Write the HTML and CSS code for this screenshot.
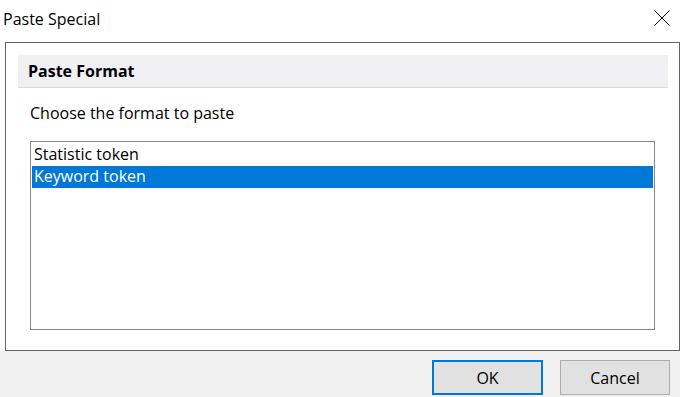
FILE: index.html
```html
<!DOCTYPE html>
<html lang="en">
<head>
    <meta charset="UTF-8">
    <title>Paste Special</title>
    <link rel="stylesheet" href="styles.css">
</head>
<body>
    <div class="titlebar">
        <span class="title">Paste Special</span>
        <svg class="close" width="16" height="16" viewBox="0 0 16 16">
            <path d="M0.5 0.5 L15.5 15.5 M15.5 0.5 L0.5 15.5" stroke="#000" stroke-width="1" fill="none"/>
        </svg>
    </div>

    <div class="panel">
        <div class="section-head">Paste Format</div>
        <div class="prompt">Choose the format to paste</div>
        <div class="listbox">
            <div class="item">Statistic token</div>
            <div class="item selected">Keyword token</div>
        </div>
    </div>

    <div class="footer">
        <button class="btn default">OK</button>
        <button class="btn">Cancel</button>
    </div>
</body>
</html>
```

FILE: styles.css
```css
* {
    box-sizing: border-box;
}

body {
    margin: 0;
    background: #fff;
    font-family: "Open Sans", "Noto Sans", sans-serif;
    font-size: 16px;
    color: #000;
    height: 397px;
    overflow: hidden;
}

.titlebar {
    height: 42px;
    display: flex;
    align-items: center;
    justify-content: space-between;
    padding: 0 10px 0 3px;
}

.title {
    font-size: 16px;
    margin-top: -4px;
}

.close {
    margin-top: -7px;
}

.panel {
    margin-left: 5px;
    height: 309px;
    border: 1px solid #646464;
    padding: 12px 11px 0 12px;
}

.section-head {
    height: 33px;
    line-height: 32px;
    background: #f0f0f4;
    border-bottom: 1px solid #dcdce0;
    padding-left: 10px;
    font-weight: bold;
}

.prompt {
    margin: 14px 0 0 12px;
    height: 39px;
    line-height: 22px;
}

.listbox {
    margin: 0 13px 0 12px;
    height: 189px;
    border: 1px solid #828790;
    padding: 2px 1px;
}

.item {
    height: 22px;
    line-height: 21px;
    padding-left: 2px;
}

.item.selected {
    background: #0078d7;
    color: #fff;
}

.footer {
    height: 46px;
    background: #f0f0f0;
    display: flex;
    justify-content: flex-end;
    align-items: flex-start;
    gap: 17px;
    padding: 9px 10px 0 0;
}

.btn {
    width: 110px;
    height: 35px;
    background: #e1e1e1;
    border: 1px solid #adadad;
    font-family: inherit;
    font-size: 16px;
    color: #000;
    padding: 0;
}

.btn.default {
    width: 111px;
    border: 2px solid #0078d7;
}
```
